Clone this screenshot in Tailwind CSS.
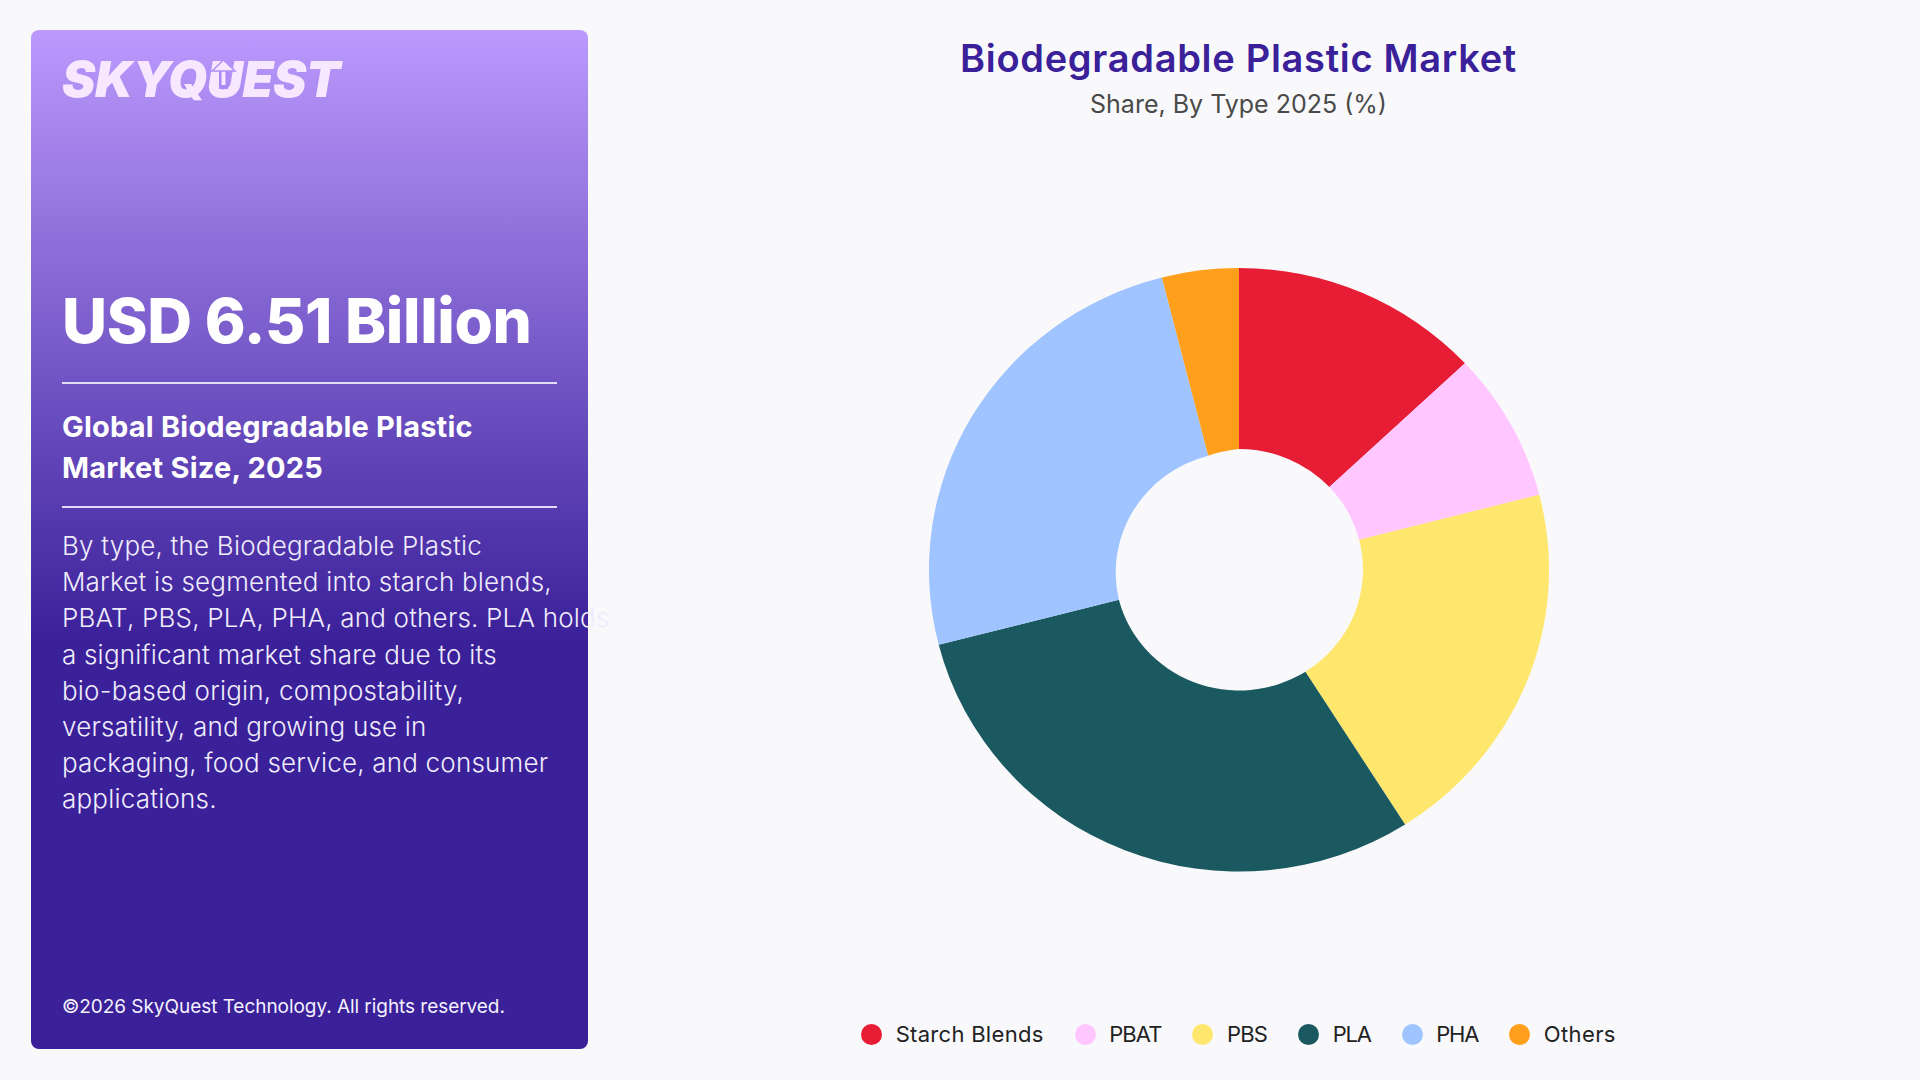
<!DOCTYPE html>
<html lang="en">
  <head>
    <meta charset="UTF-8" />
    <meta name="viewport" content="width=device-width, initial-scale=1.0" />
    <title>Biodegradable Plastic Market</title>
    <script src="https://cdn.jsdelivr.net/npm/@tailwindcss/browser@4"></script>
  </head>
  <body class="bg-[#f9f9fc] font-['Inter',sans-serif]">
    <div class="flex h-[1080px] w-[1920px] pl-[31px] pr-[31px] pt-[30px] pb-[31px]">
      <!-- left panel -->
      <aside class="relative flex w-[557px] flex-col rounded-lg bg-[linear-gradient(180deg,#bb99fd_0%,#3a2099_60%,#3a2099_100%)] px-[31px] text-white">
        <div class="mt-[19px] h-[60px] text-[50px] leading-[60px] font-black italic tracking-[-0.4px] text-[#f7e8ff]">SKYQUEST</div>
        <!-- arrow in the U of the logo -->
        <svg class="absolute top-[29px] left-[180px]" width="26" height="30" viewBox="0 0 26 30">
          <path d="M8 12h9v18H8z" fill="#ab88f2" />
          <path d="M10.5 11h4v15h-4z" fill="#f7e8ff" />
          <path d="M12.5 1 24 12H1z" fill="#f7e8ff" stroke="#b18ff6" stroke-width="1.5" />
        </svg>
        <div class="mt-[176px] text-[62px] leading-[72px] font-extrabold tracking-[-0.4px] whitespace-nowrap">USD 6.51 Billion</div>
        <div class="mt-[25px] h-[2px] bg-[#e3dcf7]"></div>
        <div class="mt-[23px] text-[29px] leading-[40.5px] font-bold tracking-[0.2px] whitespace-nowrap">Global Biodegradable Plastic<br />Market Size, 2025</div>
        <div class="mt-[18px] h-[2px] bg-[#e3dcf7]"></div>
        <p class="mt-[20px] text-[26px] leading-[36.2px] font-light tracking-[0.2px] whitespace-nowrap text-[#f0ecfb]">
          By type, the Biodegradable Plastic<br />
          Market is segmented into starch blends,<br />
          PBAT, PBS, PLA, PHA, and others. PLA holds<br />
          a significant market share due to its<br />
          bio-based origin, compostability,<br />
          versatility, and growing use in<br />
          packaging, food service, and consumer<br />
          applications.
        </p>
        <div class="mt-auto mb-[28px] text-[19px] leading-[28px] tracking-[-0.05px] text-[#f4f1fc]">©2026 SkyQuest Technology. All rights reserved.</div>
      </aside>

      <!-- chart -->
      <main class="flex flex-1 flex-col items-center">
        <h1 class="mt-[4.5px] text-[38px] leading-[46px] font-semibold tracking-[0.7px] text-[#3a2099]">Biodegradable Plastic Market</h1>
        <h2 class="mt-[5.5px] text-[25px] leading-[36px] text-[#4a4a4a]">Share, By Type 2025 (%)</h2>
        <svg class="mt-[146px]" width="620" height="604" viewBox="0 0 620 620" preserveAspectRatio="none">
          <path fill="#e71d36" d="M310 0A310 310 0 0 1 536 97.8L400.4 225.1A124 124 0 0 0 310 186Z" />
          <path fill="#ffc6ff" d="M536 97.8A310 310 0 0 1 610.3 232.9L430.1 279.2A124 124 0 0 0 400.4 225.1Z" />
          <path fill="#ffe66d" d="M610.3 232.9A310 310 0 0 1 476.1 571.7L376.4 414.7A124 124 0 0 0 430.1 279.2Z" />
          <path fill="#1a5960" d="M476.1 571.7A310 310 0 0 1 9.7 387.1L189.9 340.8A124 124 0 0 0 376.4 414.7Z" />
          <path fill="#a0c4ff" d="M9.7 387.1A310 310 0 0 1 232.9 9.7L279.2 192.9A124 124 0 0 0 189.9 340.8Z" />
          <path fill="#ff9f1c" d="M232.9 9.7A310 310 0 0 1 310 0L310 186A124 124 0 0 0 279.2 192.9Z" />
        </svg>
        <div class="mt-[147.5px] flex items-center gap-[31px] text-[22px] leading-[30px] text-[#222222]">
          <div class="flex items-center gap-[13.5px] tracking-[0.3px]"><span class="size-[21px] rounded-full bg-[#e71d36]"></span>Starch Blends</div>
          <div class="flex items-center gap-[13.5px] tracking-[-0.9px]"><span class="size-[21px] rounded-full bg-[#ffc6ff]"></span>PBAT</div>
          <div class="flex items-center gap-[13.5px] tracking-[-0.8px]"><span class="size-[21px] rounded-full bg-[#ffe66d]"></span>PBS</div>
          <div class="flex items-center gap-[13.5px] tracking-[-1.2px]"><span class="size-[21px] rounded-full bg-[#1a5960]"></span>PLA</div>
          <div class="flex items-center gap-[13.5px] tracking-[-1.2px]"><span class="size-[21px] rounded-full bg-[#a0c4ff]"></span>PHA</div>
          <div class="flex items-center gap-[13.5px] tracking-[0.4px]"><span class="size-[21px] rounded-full bg-[#ff9f1c]"></span>Others</div>
        </div>
      </main>
    </div>
  </body>
</html>
